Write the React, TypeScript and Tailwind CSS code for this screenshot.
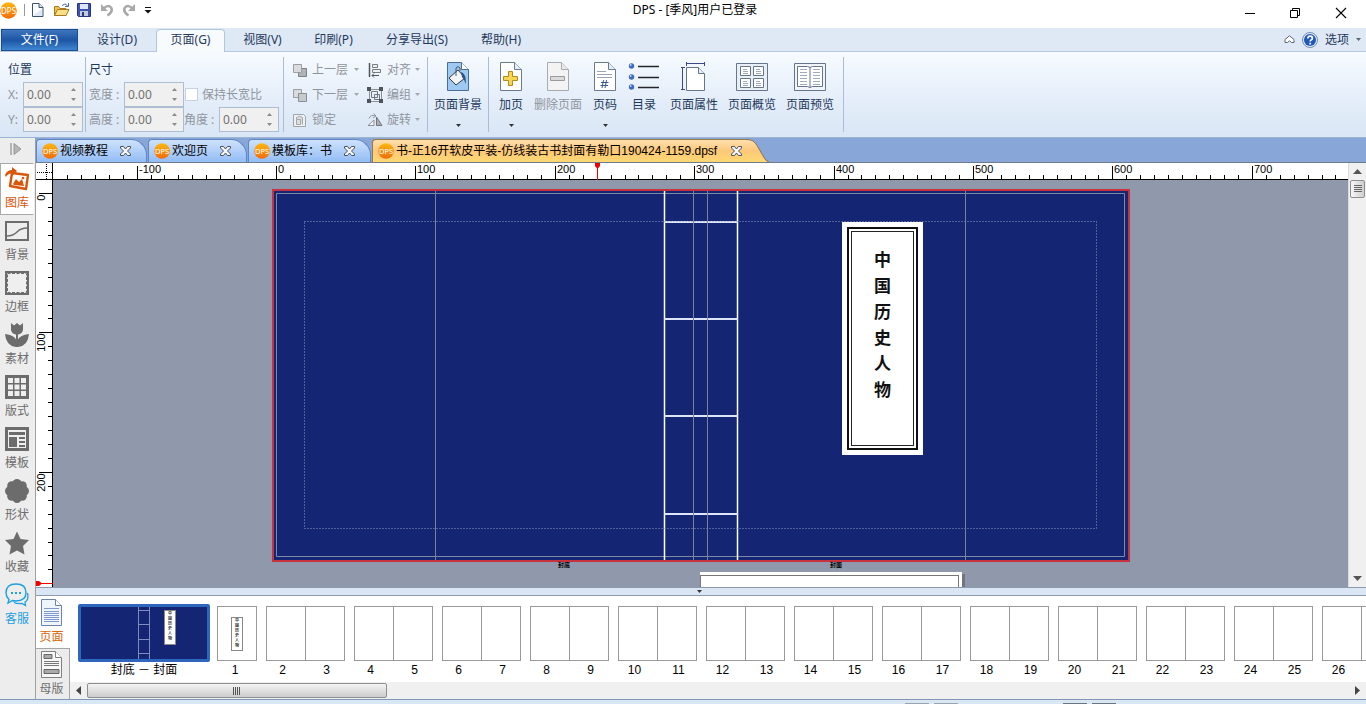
import type { ReactNode } from "react";

const UI = "font-['Noto_Sans','Noto_Sans_CJK_SC',sans-serif]";
const SONG = "font-['Liberation_Sans','Noto_Sans_CJK_SC',sans-serif]";

/* ---------- small shared pieces ---------- */

function Logo({ className }: { className?: string }) {
  return (
    <svg viewBox="0 0 17 17" className={className} aria-hidden="true">
      <defs>
        <linearGradient id="dps" x1="0" y1="0" x2="0" y2="1">
          <stop offset="0" stopColor="#fdb913" />
          <stop offset="1" stopColor="#f26a0a" />
        </linearGradient>
      </defs>
      <circle cx="8.5" cy="8.5" r="8.300" fill="url(#dps)" />
      <text x="8.5" y="11.500" textAnchor="middle" fontSize="8" fill="#fff" fontFamily="Noto Sans, sans-serif">
        DPS
      </text>
    </svg>
  );
}

function Caret({ className = "text-[#333]" }: { className?: string }) {
  return (
    <svg viewBox="0 0 5 3" className={`h-[3px] w-[5px] shrink-0 ${className}`} aria-hidden="true">
      <path d="M0 0h5L2.5 3z" fill="currentColor" />
    </svg>
  );
}

function Divider() {
  return <div className="my-[5px] w-px shrink-0 bg-[#a9bdd6]" />;
}

/* ---------- title bar ---------- */

function TitleBar() {
  return (
    <header className="grid h-7 shrink-0 grid-cols-[1fr_auto_1fr] bg-white">
      <div className="flex h-5 items-center">
        <Logo className="h-[17px] w-[17px]" />
        <div className="ml-[7px] h-3 w-px bg-[#999]" />
        <button aria-label="新建" className="ml-[6px] w-[13px]">
          <svg viewBox="0 0 13 16" className="h-4 w-[13px]">
            <path d="M1.5 1.5h6.500l4 4v9h-10.500z" fill="#fbfcfe" stroke="#3c5070" />
            <path d="M8 1.500v4h4" fill="#d6e2f0" stroke="#3c5070" />
            <path d="M3 13L11 7v7H3z" fill="#dde8f4" />
          </svg>
        </button>
        <button aria-label="打开" className="ml-[9px] w-[18px]">
          <svg viewBox="0 0 18 16" className="h-4 w-[18px]">
            <path d="M1.5 13.500v-9h4l1.500 2h6v7z" fill="#eec24e" stroke="#a9791d" />
            <path d="M1.500 13.500l3-6h11.500l-3 6z" fill="#fbdf85" stroke="#a9791d" />
            <path d="M9 3.500q3-3 5.500 0M15.500 1v3.500H12" fill="none" stroke="#4a6a9a" />
          </svg>
        </button>
        <button aria-label="保存" className="ml-[5px] w-[16px]">
          <svg viewBox="0 0 16 16" className="h-4 w-4">
            <path d="M1.500 1.500h13v13h-12l-1-1z" fill="#3f51b0" stroke="#28358a" />
            <path d="M4 2h8v5H4z" fill="#dfe7f7" />
            <path d="M4 9h8v5H4z" fill="#c6cbd8" />
            <path d="M6 10h2v4H6z" fill="#2b3888" />
          </svg>
        </button>
        <button aria-label="撤销" className="ml-2 w-[14px]">
          <svg viewBox="0 0 14 14" className="h-[14px] w-[14px]">
            <path d="M3 6q5-5 8-1.500 2.500 4-3.500 8" fill="none" stroke="#a9a9a9" strokeWidth="2.500" />
            <path d="M1 1v7h7z" fill="#a9a9a9" />
          </svg>
        </button>
        <button aria-label="重做" className="ml-2 w-[14px]">
          <svg viewBox="0 0 14 14" className="h-[14px] w-[14px]">
            <path d="M11 6q-5-5-8-1.500-2.500 4 3.500 8" fill="none" stroke="#a9a9a9" strokeWidth="2.500" />
            <path d="M13 1v7H6z" fill="#a9a9a9" />
          </svg>
        </button>
        <button aria-label="自定义快速访问工具栏" className="ml-2 w-[8px]">
          <svg viewBox="0 0 8 7" className="h-[7px] w-[8px]">
            <path d="M1 .5h6" stroke="#111" />
            <path d="M.5 3h7L4 6.500z" fill="#111" />
          </svg>
        </button>
      </div>
      <h1 className="flex h-5 items-center pl-6 text-[12px] text-black">DPS - [季风]用户已登录</h1>
      <div className="flex items-center justify-end pr-px">
        <button aria-label="最小化" className="flex h-7 w-[45px] justify-center pt-[7px]">
          <svg viewBox="0 0 12 12" className="h-3 w-3">
            <path d="M1 6.500h10" stroke="#000" />
          </svg>
        </button>
        <button aria-label="还原" className="flex h-7 w-[45px] justify-center pt-[7px]">
          <svg viewBox="0 0 12 12" className="h-3 w-3" fill="none" stroke="#000">
            <path d="M1.500 3.500h7v7h-7zM3.500 3.500v-2h7v7h-2" />
          </svg>
        </button>
        <button aria-label="关闭" className="flex h-7 w-[48px] justify-center pt-[7px]">
          <svg viewBox="0 0 12 12" className="h-3 w-3">
            <path d="M1 1l10 10M11 1L1 11" stroke="#000" strokeWidth="1.100" />
          </svg>
        </button>
      </div>
    </header>
  );
}

/* ---------- ribbon tabs ---------- */

function MenuBar() {
  const tab = "h-6 text-center text-[#1e395b]";
  return (
    <nav className="flex h-6 shrink-0 border-b border-[#b7c9e0] bg-[#dfe8f5] text-[12px]">
      <button className="mt-px ml-px h-[22px] w-[77px] border border-[#1d4b8c] bg-linear-to-b from-[#3e76bd] via-[#1c55a4] to-[#3f86d0] text-white">
        文件(F)
      </button>
      <button className={`${tab} w-[78px]`}>设计(D)</button>
      <button className="mt-px h-6 w-[69px] shrink-0 rounded-t-[4px] border border-b-0 border-[#b3c5dd] bg-[#f8fbfe] pb-[3px] text-center text-[#1e395b]">
        页面(G)
      </button>
      <button className={`${tab} w-[75px]`}>视图(V)</button>
      <button className={`${tab} w-[67px]`}>印刷(P)</button>
      <button className={`${tab} w-[100px]`}>分享导出(S)</button>
      <button className={`${tab} w-[68px]`}>帮助(H)</button>
      <div className="ml-auto flex items-center gap-[7px] pr-[5px] text-[#1e395b]">
        <button aria-label="折叠功能区">
          <svg viewBox="0 0 11 9" className="h-[9px] w-[11px]">
            <path d="M1 4.500L5.500.8 10 4.500v3H7.500L5.500 5.800 3.500 7.500H1z" fill="#fff" stroke="#5a6678" />
          </svg>
        </button>
        <button aria-label="帮助">
          <svg viewBox="0 0 16 16" className="h-4 w-4">
            <circle cx="8" cy="8" r="7.500" fill="#e8eff9" stroke="#6f8cb8" />
            <circle cx="8" cy="8" r="6" fill="#2058b8" />
            <path d="M5.800 6.500q0-2.300 2.300-2.300t2.300 2q0 1.200-1.300 1.800-.9.500-.9 1.500M8.200 10.700v1.700" fill="none" stroke="#fff" strokeWidth="1.700" />
          </svg>
        </button>
        <button className="flex items-center gap-[7px]">
          选项
          <Caret className="text-[#5a6678]" />
        </button>
      </div>
    </nav>
  );
}

/* ---------- ribbon ---------- */

function Spin({ id, label, w }: { id: string; label: string; w: string }) {
  return (
    <div className="flex h-[25px] items-center text-[#8f959d]">
      <label htmlFor={id} className={`${w} shrink-0 whitespace-nowrap`}>
        {label}
      </label>
      <div className="flex h-[25px] w-[60px] items-center border border-[#adbdd2] bg-[#f0f0f0]">
        <input id={id} defaultValue="0.00" className="h-full w-[46px] bg-transparent pl-[3px] text-[12px] text-[#707070] outline-none" />
        <svg viewBox="0 0 7 13" className="h-[13px] w-[7px]" aria-hidden="true">
          <path d="M1 3L3.500 0 6 3zM1 10L3.500 13 6 10z" fill="#868b92" />
        </svg>
      </div>
    </div>
  );
}

const arrangeIcons: Record<string, ReactNode> = {
  up: (
    <>
      <path d="M6.500 6.500h8v8h-8z" fill="#b0b3b7" stroke="#7d8186" />
      <path d="M1.500 2.500h8v8h-8z" fill="#d9dbde" stroke="#9b9fa4" />
    </>
  ),
  down: (
    <>
      <path d="M1.500 2.500h8v8h-8z" fill="#d9dbde" stroke="#9b9fa4" />
      <path d="M6.500 6.500h8v8h-8z" fill="#c7cacd" stroke="#8a8e93" />
    </>
  ),
  lock: (
    <>
      <path d="M1.500 2.500h10l2 2v10h-12z" fill="#f0f1f2" stroke="#a1a5aa" />
      <path d="M4.500 7v-1.500q3-2.500 6 0v7M4.500 7.500h4v5h-4z" fill="#dedfe1" stroke="#a1a5aa" />
    </>
  ),
  align: (
    <>
      <path d="M2.500 1v14" stroke="#50555c" strokeWidth="1.500" />
      <path d="M5.500 2.500h5v3h-5zM5.500 7.500h8v3h-8z" fill="#eef0f2" stroke="#777c83" />
      <path d="M5 13.500h7M7 11.500l-2 2 2 2" fill="none" stroke="#50555c" />
    </>
  ),
  group: (
    <>
      <path d="M2.500 2.500h12v12h-12z" fill="none" stroke="#8d9298" />
      <path d="M4.500 4.500h6v6h-6zM7.500 7.500h5v5h-5z" fill="none" stroke="#73787e" />
      <path d="M0 0h4v4H0zM12 0h4v4h-4zM0 12h4v4H0zM12 12h4v4h-4z" fill="#4f545a" />
    </>
  ),
  rotate: (
    <>
      <path d="M1 13.500L7 8v5.500z" fill="#f3f4f5" stroke="#8e9298" />
      <path d="M9.500 5v8.500H15z" fill="#aaadb2" stroke="#72767c" />
      <path d="M2 6.500Q4 2 8 4M6.500 1.500L9 4 6 6" fill="none" stroke="#8e9298" />
    </>
  ),
};

function ArrangeButton({ icon, label, caret = true }: { icon: string; label: string; caret?: boolean }) {
  return (
    <button className="flex h-[25px] items-center text-[#8f959d]">
      <svg viewBox="0 0 16 16" className="mr-1 h-4 w-4">
        {arrangeIcons[icon]}
      </svg>
      {label}
      {caret && (
        <span className="ml-auto">
          <Caret className="text-[#a2a8b0]" />
        </span>
      )}
    </button>
  );
}

const sheet = "M5.500 1.500h14l7 7v21h-21z";
const fold = "M19.500 1.500v7h7";

const bigIcons: Record<string, ReactNode> = {
  background: (
    <>
      <path d={sheet} fill="#9dc9f2" stroke="#4d6c94" />
      <path d={fold} fill="#fff" stroke="#4d6c94" />
      <path d="M7 17l9-8 7 8-9 7z" fill="#f2f4f6" stroke="#333b46" />
      <path d="M14 15V7q2-3 4 0v3" fill="none" stroke="#4a525e" />
      <path d="M19 11q5 1 5 12-1.500-4-4-7z" fill="#2c5285" />
    </>
  ),
  add: (
    <>
      <path d={sheet} fill="#fff" stroke="#6c7a90" />
      <path d={fold} fill="#e4edf7" stroke="#6c7a90" />
      <path d="M13.500 10.500h4v5h5v4h-5v5h-4v-5h-5v-4h5z" fill="#f5d552" stroke="#b58c1c" />
    </>
  ),
  remove: (
    <>
      <path d={sheet} fill="#f3f3f4" stroke="#a8acb2" />
      <path d={fold} fill="#e8e8ea" stroke="#a8acb2" />
      <path d="M8.500 15.500h14v4h-14z" fill="#dadada" stroke="#989ba0" />
    </>
  ),
  number: (
    <>
      <path d={sheet} fill="#fff" stroke="#6c7a90" />
      <path d={fold} fill="#e4edf7" stroke="#6c7a90" />
      <path d="M8 10.500h9M8 13.500h15M8 16.500h15" stroke="#98a4b6" />
      <path d="M14.500 19l-1.500 8M17.500 19L16 27M12 21.500h7.500M11.500 24.500h7.500" stroke="#3c5b88" fill="none" />
    </>
  ),
  toc: (
    <>
      <circle cx="3.500" cy="5" r="2.700" fill="#3d6bc0" />
      <circle cx="3.500" cy="16" r="2.700" fill="#3d6bc0" />
      <circle cx="3.500" cy="26" r="2.700" fill="#3d6bc0" />
      <circle cx="2.700" cy="4" r=".9" fill="#c6d8f4" />
      <circle cx="2.700" cy="15" r=".9" fill="#c6d8f4" />
      <circle cx="2.700" cy="25" r=".9" fill="#c6d8f4" />
      <path d="M10 5.500h21M10 16.500h21M10 26.500h21" stroke="#23262b" strokeWidth="1.500" />
    </>
  ),
  props: (
    <>
      <path d="M8.500 6.500h12l6 6v17h-18z" fill="#fff" stroke="#67758b" />
      <path d="M20.500 6.500v6h6" fill="#e4edf7" stroke="#67758b" />
      <path d="M8 2.500h18M8.500 1v4M26.500 1v4M4.500 6v23M3 6.500h4M3 28.500h4" stroke="#3b4a80" fill="none" />
    </>
  ),
  overview: (
    <>
      <path d="M.5 2.500h31v27H.5z" fill="#e9eff6" stroke="#67758b" />
      <path d="M4.500 5.500h10v9h-10zM17.500 5.500h10v9h-10zM4.500 17.500h10v9h-10zM17.500 17.500h10v9h-10z" fill="#fff" stroke="#67758b" />
      <path d="M7 8.500h4M7 10.500h5M7 12.500h5M20 8.500h4M20 10.500h5M20 12.500h5M7 20.500h4M7 22.500h5M7 24.500h5M20 20.500h4M20 22.500h5M20 24.500h5" stroke="#9eabbd" />
    </>
  ),
  preview: (
    <>
      <path d="M.5 2.500h31v27H.5z" fill="#f1f5fa" stroke="#67758b" />
      <path d="M3.500 5.500h10l2.500 1 2.500-1h10v20h-10l-2.500 1-2.500-1h-10zM16 6.500v20" fill="#fff" stroke="#67758b" />
      <path d="M6 8.500h7M6 11.500h7M6 14.500h7M6 17.500h7M6 20.500h7M6 23.500h7M19 8.500h7M19 11.500h7M19 14.500h7M19 17.500h7M19 20.500h7M19 23.500h7" stroke="#9eabbd" />
    </>
  ),
};

function BigButton({ icon, label, w, caret, disabled }: { icon: string; label: string; w: string; caret?: boolean; disabled?: boolean }) {
  return (
    <button disabled={disabled} className={`flex ${w} shrink-0 flex-col items-center pt-[9px] ${disabled ? "text-[#8f959d]" : "text-[#1e395b]"}`}>
      <svg viewBox="0 0 32 32" className="h-8 w-8">
        {bigIcons[icon]}
      </svg>
      <span className="h-6 leading-6 whitespace-nowrap">{label}</span>
      {caret && (
        <span className="flex h-4 items-center">
          <Caret />
        </span>
      )}
    </button>
  );
}

function Ribbon() {
  return (
    <section className="flex h-[86px] shrink-0 border-b border-[#9db4d3] bg-linear-to-b from-[#f7fbff] via-[#e6effa] to-[#d9e6f5] text-[12px]">
      <div className="w-[85px] shrink-0 pt-[5px] pl-2">
        <h2 className="h-[25px] leading-[25px] text-[#1e395b]">位置</h2>
        <Spin id="x" label="X:" w="w-[15px]" />
        <Spin id="y" label="Y:" w="w-[15px]" />
      </div>
      <Divider />
      <div className="w-[197px] shrink-0 pt-[5px] pl-[3px]">
        <h2 className="h-[25px] leading-[25px] text-[#1e395b]">尺寸</h2>
        <div className="flex">
          <Spin id="w" label="宽度 :" w="w-[35px]" />
          <label className="flex items-center pl-[1px] text-[#8f959d]">
            <input type="checkbox" className="mr-1 h-[13px] w-[13px] appearance-none border border-[#c6d1df] bg-white" />
            保持长宽比
          </label>
        </div>
        <div className="flex">
          <Spin id="h" label="高度 :" w="w-[35px]" />
          <Spin id="a" label="角度 :" w="w-[35px]" />
        </div>
      </div>
      <Divider />
      <div className="grid w-[143px] shrink-0 grid-cols-[67px_53px] content-start gap-x-2 pt-[5px] pl-2">
        <ArrangeButton icon="up" label="上一层" />
        <ArrangeButton icon="align" label="对齐" />
        <ArrangeButton icon="down" label="下一层" />
        <ArrangeButton icon="group" label="编组" />
        <ArrangeButton icon="lock" label="锁定" caret={false} />
        <ArrangeButton icon="rotate" label="旋转" />
      </div>
      <Divider />
      <BigButton icon="background" label="页面背景" w="w-[60px]" caret />
      <Divider />
      <BigButton icon="add" label="加页" w="w-[44px]" caret />
      <BigButton icon="remove" label="删除页面" w="w-[50px]" disabled />
      <BigButton icon="number" label="页码" w="w-[44px]" caret />
      <BigButton icon="toc" label="目录" w="w-[34px]" />
      <BigButton icon="props" label="页面属性" w="w-[66px]" />
      <BigButton icon="overview" label="页面概览" w="w-[50px]" />
      <BigButton icon="preview" label="页面预览" w="w-[66px]" />
      <Divider />
    </section>
  );
}

/* ---------- left tool bar ---------- */

const tools: { label: string; icon: ReactNode; tone?: string }[] = [
  {
    label: "图库",
    tone: "text-[#d9560b]",
    icon: (
      <>
        <path d="M7 6l16 2-2 14-16-3z" fill="none" stroke="currentColor" strokeWidth="2.400" strokeLinejoin="round" />
        <path d="M8 17l3-5 3 3 3-3 2 7-10-1z" fill="currentColor" />
        <circle cx="18" cy="11" r="1.300" fill="currentColor" />
        <path d="M0 8q2-5 7-5V0l5 4-5 5V6.500Q3 6 1 10z" fill="currentColor" />
      </>
    ),
  },
  {
    label: "背景",
    icon: (
      <>
        <path d="M1 3h22v18H1z" fill="none" stroke="currentColor" strokeWidth="2" />
        <path d="M2 17q6 0 10-4t10-4" fill="none" stroke="currentColor" strokeWidth="1.500" />
      </>
    ),
  },
  {
    label: "边框",
    icon: (
      <>
        <path d="M1 1h22v22H1z" fill="none" stroke="currentColor" strokeWidth="2" />
        <path d="M2.500 2.500h19v19h-19z" fill="#efefef" stroke="currentColor" strokeDasharray="3 1.500" />
      </>
    ),
  },
  {
    label: "素材",
    icon: (
      <path d="M6 0l3 2.500L12 0l3 2.500L18 0v7q-1 4-5 4.500v5Q15 12 24 11q-1 12-11 13h-2Q1 23 0 11q9 1 11 5.500v-5Q7 11 6 7z" fill="currentColor" />
    ),
  },
  {
    label: "版式",
    icon: (
      <>
        <path d="M0 0h24v24H0z" fill="currentColor" />
        <path d="M3 3h5v5H3zM9.500 3h5v5h-5zM16 3h5v5h-5zM3 9.500h5v5H3zM9.500 9.500h5v5h-5zM16 9.500h5v5h-5zM3 16h5v5H3zM9.500 16h5v5h-5zM16 16h5v5h-5z" fill="#efefef" />
      </>
    ),
  },
  {
    label: "模板",
    icon: (
      <>
        <path d="M1.500 1.500h21v21h-21z" fill="#efefef" stroke="currentColor" strokeWidth="3" />
        <path d="M4 5h16v3H4zM4 10h8v10H4zM14 10h6v2h-6zM14 14h6v2h-6zM14 18h6v2h-6z" fill="currentColor" />
      </>
    ),
  },
  {
    label: "形状",
    icon: (
      <g fill="currentColor">
        <circle cx="12" cy="12" r="10" />
        <circle cx="12" cy="4.500" r="4.500" />
        <circle cx="17.300" cy="6.700" r="4.500" />
        <circle cx="19.500" cy="12" r="4.500" />
        <circle cx="17.300" cy="17.300" r="4.500" />
        <circle cx="12" cy="19.500" r="4.500" />
        <circle cx="6.700" cy="17.300" r="4.500" />
        <circle cx="4.500" cy="12" r="4.500" />
        <circle cx="6.700" cy="6.700" r="4.500" />
      </g>
    ),
  },
  {
    label: "收藏",
    icon: <path d="M12 .5l3.500 7.500 8.500 1-6 6 1.500 8.500L12 19.500l-7.500 4L6 15 0 9l8.500-1z" fill="currentColor" />,
  },
  {
    label: "客服",
    tone: "text-[#1e9fe0]",
    icon: (
      <>
        <path d="M4 16.500Q1 13.500 1 10 1 1 11 1t10 8.500q0 8.500-10 8.500-2 0-3.500-.5L3 20z" fill="none" stroke="currentColor" strokeWidth="1.400" />
        <path d="M22.500 10q1.500 7-2.500 9l.5 3.500-3.500-2q-5 .5-8-1" fill="none" stroke="currentColor" strokeWidth="1.300" />
        <path d="M6 9h2v2H6zM10 9h2v2h-2zM14 9h2v2h-2z" fill="currentColor" />
      </>
    ),
  },
];

function SideBar() {
  return (
    <aside className="w-9 shrink-0 border-r border-[#a0a0a0] bg-[#ededed]">
      <button aria-label="展开" className="flex h-[25px] w-full items-center justify-center pb-[3px] pr-1">
        <svg viewBox="0 0 12 12" className="h-3 w-3">
          <path d="M1 0v12" stroke="#a0a0a0" strokeWidth="1.500" />
          <path d="M4 .5L11 6l-7 5.500z" fill="#b4b4b4" stroke="#999" />
        </svg>
      </button>
      {tools.map((t, i) => (
        <button
          key={t.label}
          className={`flex h-[52px] w-[34px] flex-col items-center border pt-[3px] ${i === 0 ? "border-[#a9a9a9] border-r-white bg-white" : "border-transparent"} ${t.tone ?? "text-[#6c6c6c]"}`}
        >
          <svg viewBox="0 0 24 24" className="h-6 w-6 shrink-0">
            {t.icon}
          </svg>
          <span className="text-[12px] leading-6">{t.label}</span>
        </button>
      ))}
    </aside>
  );
}

/* ---------- document tabs ---------- */

function CloseMark() {
  return (
    <svg viewBox="0 0 11 10" className="h-[10px] w-[11px]">
      <path d="M.5.500h3l2 2.500 2-2.500h3v1.500L7.500 5l3 3v1.500h-3l-2-2.500-2 2.500h-3V8l3-3-3-3z" fill="#f4f6f9" stroke="#4a525e" />
    </svg>
  );
}

function DocTabs() {
  const docs = [
    { name: "视频教程", w: "w-[111px]" },
    { name: "欢迎页", w: "w-[99px]" },
    { name: "模板库：书", w: "w-[123px]" },
  ];
  return (
    <div className={`flex h-[25px] shrink-0 items-end overflow-hidden border-b border-[#6f7c90] bg-[#88a7d8] ${SONG} text-[12px] text-black`}>
      {docs.map((d) => (
        <div key={d.name} className={`${d.w} mr-px flex h-[23px] shrink-0 items-center rounded-tl-[4px] rounded-tr-[16px] border border-b-0 border-[#5f87c6] bg-linear-to-b from-[#cfe1fb] to-[#92bdf6] pl-[5px]`}>
          <Logo className="h-4 w-4" />
          <button className="ml-[2px]">{d.name}</button>
          <button aria-label="关闭标签" className="ml-3">
            <CloseMark />
          </button>
        </div>
      ))}
      <div className="flex h-[23px] shrink-0">
        <div className="flex items-center rounded-tl-[4px] border-t border-l border-[#9a7a45] bg-linear-to-b from-[#fddfae] via-[#fdc878] to-[#ffd873] pr-1 pl-[5px]">
          <Logo className="h-4 w-4" />
          <button className="ml-[2px] whitespace-nowrap">书-正16开软皮平装-仿线装古书封面有勒口190424-1159.dpsf</button>
          <button aria-label="关闭标签" className="ml-[14px]">
            <CloseMark />
          </button>
        </div>
        <svg viewBox="0 0 24 23" className="h-[23px] w-6" aria-hidden="true">
          <defs>
            <linearGradient id="tab-end" x1="0" y1="0" x2="0" y2="1">
              <stop offset="0" stopColor="#fddfae" />
              <stop offset=".5" stopColor="#fdc878" />
              <stop offset="1" stopColor="#ffd873" />
            </linearGradient>
          </defs>
          <path d="M0 .5h1q7 0 10 6l7 12q2 4 5 4.500H0z" fill="url(#tab-end)" />
          <path d="M0 .5h1q7 0 10 6l7 12q2 4 5 4.500" fill="none" stroke="#8a7148" />
        </svg>
      </div>
    </div>
  );
}

/* ---------- rulers ---------- */

const STEP = 13.94;
const hTicks = Array.from({ length: 92 }, (_, i) => i - 15);
const vTicks = Array.from({ length: 28 }, (_, i) => i);

function HRuler() {
  return (
    <div className="flex h-[17px] shrink-0 bg-white">
      <svg className="h-[17px] w-[17px] shrink-0" viewBox="0 0 17 17" aria-hidden="true">
        <path d="M10.500 1v16M1 9.500h16" stroke="#000" strokeDasharray="1 1" />
        <path d="M0 16.500h17M16.500 0v17" stroke="#000" />
      </svg>
      <svg className={`h-[17px] min-w-0 flex-1 ${SONG} text-[11px]`}>
        {hTicks.map((n) => {
          const x = Math.round(223 + n * STEP) + 0.5;
          const major = n % 10 === 0;
          return (
            <g key={n}>
              <path d={`M${x} ${major ? 3 : 12}V17`} stroke="#000" />
              {major && (
                <text x={x + 1.5} y="10" fill="#000">
                  {n * 10}
                </text>
              )}
            </g>
          );
        })}
        <path d="M0 16.500h3000" stroke="#000" />
        <path d="M544.500 0v17" stroke="#e00" />
        <path d="M542 0h5v3l-2.500 3-2.500-3z" fill="#e00" />
      </svg>
    </div>
  );
}

function VRuler() {
  return (
    <svg className={`h-full w-[17px] shrink-0 bg-white ${SONG} text-[11px]`}>
      {vTicks.map((n) => {
        const y = Math.round(13 + n * STEP) + 0.5;
        const major = n % 10 === 0;
        return (
          <g key={n}>
            <path d={`M${major ? 3 : 12} ${y}H17`} stroke="#000" />
            {major && (
              <text transform={`translate(9 ${y + 1}) rotate(-90)`} textAnchor="end" fill="#000">
                {n * 10}
              </text>
            )}
          </g>
        );
      })}
      <path d="M16.500 0v2000" stroke="#000" />
      <path d="M0 403.500h17" stroke="#e00" />
      <path d="M0 401h3l3 2.500-3 2.500H0z" fill="#e00" />
    </svg>
  );
}

/* ---------- canvas ---------- */

function Cover() {
  return (
    <div className="absolute top-[9px] left-[219px] h-[373px] w-[858px] border-2 border-[#c8323f] bg-[#142673]">
      <svg viewBox="0 0 854 369" className="absolute inset-0 h-full w-full" fill="none" aria-hidden="true">
        <path d="M2.500 2.500h848v363h-848z" stroke="#7f88a6" />
        <path d="M390.500 0v369M463.500 0v369" stroke="#fff" strokeWidth="1.500" />
        <path d="M390 31h74M390 128h74M390 225h74M390 323h74" stroke="#dfe5f8" strokeWidth="2" />
        <path d="M30.500 30.500h792v307h-792z" stroke="#8f9ac4" strokeDasharray="1 2" />
        <path d="M161.500 0v369M419.500 0v369M433.500 0v369M691.500 0v369" stroke="#7c8292" />
      </svg>
      <div className="absolute top-[31px] left-[568px] h-[233px] w-[81px] bg-white p-[5px]">
        <div className="h-full border-2 border-[#111] p-[2px]">
          <div className="flex h-full flex-col items-center border border-[#222] pt-[15px] text-[17px] leading-[26px] font-bold text-[#111]">
            {"中国历史人物".split("").map((c) => (
              <span key={c}>{c}</span>
            ))}
          </div>
        </div>
      </div>
    </div>
  );
}

function Canvas() {
  return (
    <div className="relative min-w-0 flex-1 overflow-hidden bg-[#9098ac]">
      <Cover />
      <div className="absolute top-[382px] left-[505px] text-[6px] leading-[6px] font-bold text-black">封底</div>
      <div className="absolute top-[382px] left-[777px] text-[6px] leading-[6px] font-bold text-black">封面</div>
      <div className="absolute top-[392px] left-[647px] h-[300px] w-[262px] bg-white pt-[3px] pr-[3px] shadow-[3px_2px_0_#70757f]">
        <div className="h-full border border-[#777]" />
      </div>
    </div>
  );
}

function VScroll() {
  return (
    <div className="flex w-[18px] shrink-0 flex-col items-center border-l border-[#dcdcdc] bg-[#f0f0f0]">
      <button aria-label="向上滚动" className="flex h-[17px] items-center">
        <svg viewBox="0 0 9 5" className="h-[5px] w-[9px]">
          <path d="M0 5L4.500 0 9 5z" fill="#555" />
        </svg>
      </button>
      <button aria-label="垂直滚动条" className="flex h-[18px] w-[15px] items-center justify-center rounded-[2px] border border-[#8f8f8f] bg-linear-to-r from-[#f6f6f6] to-[#cfcfcf]">
        <svg viewBox="0 0 8 8" className="h-2 w-2">
          <path d="M0 .5h8M0 2.500h8M0 4.500h8M0 6.500h8" stroke="#666" />
        </svg>
      </button>
      <button aria-label="向下滚动" className="mt-auto flex h-[17px] items-center">
        <svg viewBox="0 0 9 5" className="h-[5px] w-[9px]">
          <path d="M0 0h9L4.500 5z" fill="#555" />
        </svg>
      </button>
    </div>
  );
}

/* ---------- page strip ---------- */

function PageIcon({ master }: { master?: boolean }) {
  return (
    <svg viewBox="0 0 24 28" className="h-7 w-6 shrink-0">
      <path d="M1.500.500h14l6 6v20h-20z" fill={master ? "#f7f7f7" : "#eff5fc"} stroke={master ? "#808080" : "#6e84a6"} />
      <path d="M15.500.500v6h6" fill="#fff" stroke={master ? "#808080" : "#6e84a6"} />
      {master ? (
        <>
          <path d="M4 3.500h8v4H4zM4 18.500h15v4H4z" fill="#aaa" stroke="#666" />
          <path d="M4 10.500h15M4 12.500h15M4 14.500h15" stroke="#777" />
        </>
      ) : (
        <path d="M4 9.500h15M4 12.500h15M4 14.500h15M4 16.500h15M4 18.500h15M4 20.500h15M4 22.500h15" stroke="#8397cf" />
      )}
    </svg>
  );
}

function MiniLabel({ className }: { className: string }) {
  return (
    <div className={`${className} flex w-3 flex-col items-center border border-[#888] bg-white text-[4px] leading-[5px] font-bold text-[#333]`}>
      {"中国历史人物".split("").map((c) => (
        <span key={c}>{c}</span>
      ))}
    </div>
  );
}

const spreads = Array.from({ length: 12 }, (_, i) => [2 + i * 2, 3 + i * 2]).concat([[26]]);

function PageStrip() {
  return (
    <section className="flex h-[103px] shrink-0 bg-white">
      <div className="w-[34px] shrink-0 bg-[#ececec] text-[12px]">
        <button className="flex h-[52px] w-full flex-col items-center bg-white pt-[3px] pr-[3px] text-[#d9660b]">
          <PageIcon />
          <span className="leading-5">页面</span>
        </button>
        <button className="flex h-[51px] w-full flex-col items-center border-t border-r border-[#a5a5a5] pt-[2px] pr-[2px] text-[#707070]">
          <PageIcon master />
          <span className="leading-5">母版</span>
        </button>
      </div>
      <div className={`flex min-w-0 flex-1 flex-col ${SONG} text-[12px] text-black`}>
        <div className="flex h-[86px] items-start overflow-hidden pt-2 pl-2">
          <button className="w-[132px] shrink-0">
            <div className="relative h-[58px] rounded-[2px] border-[3px] border-[#2f66bd] bg-[#142673]">
              <svg viewBox="0 0 126 52" className="h-[52px] w-[126px]" fill="none" stroke="#7f8cc0" aria-hidden="true">
                <path d="M57.500 0v52M68.500 0v52M57 3.500h12M57 17.500h12M57 32.500h12M57 46.500h12" />
              </svg>
              <MiniLabel className="absolute top-[3px] left-[83px] h-[35px]" />
            </div>
            <div className="h-4 leading-4">封底 － 封面</div>
          </button>
          <button className="ml-[5px] w-[44px] shrink-0 pt-[2px]">
            <div className="ml-[2px] flex h-[55px] w-10 items-center justify-center border border-[#9a9a9a]">
              <MiniLabel className="h-[34px]" />
            </div>
            <div className="h-[18px] pr-1 leading-[18px]">1</div>
          </button>
          {spreads.map(([left, right]) => (
            <button key={left} className="w-[88px] shrink-0 pt-[2px]">
              <div className="ml-[7px] flex h-[55px] w-[79px] border border-[#9a9a9a]">
                <div className="w-[39px] border-r border-[#9a9a9a]" />
              </div>
              <div className="flex h-[18px] leading-[18px]">
                <span className="w-[44px] pl-[3px]">{left}</span>
                {right && <span className="w-[44px] pl-[3px]">{right}</span>}
              </div>
            </button>
          ))}
        </div>
        <div className="flex h-[17px] items-center bg-[#f0f0f0] px-[6px]">
          <button aria-label="向左滚动">
            <svg viewBox="0 0 5 9" className="h-[9px] w-[5px]">
              <path d="M5 0L0 4.500 5 9z" fill="#444" />
            </svg>
          </button>
          <button aria-label="水平滚动条" className="ml-[6px] flex h-[15px] w-[300px] items-center justify-center rounded-[2px] border border-[#8f8f8f] bg-linear-to-b from-[#f4f4f4] to-[#cccccc]">
            <svg viewBox="0 0 8 8" className="h-2 w-2">
              <path d="M.5 0v8M2.500 0v8M4.500 0v8M6.500 0v8" stroke="#555" />
            </svg>
          </button>
          <button aria-label="向右滚动" className="ml-auto">
            <svg viewBox="0 0 5 9" className="h-[9px] w-[5px]">
              <path d="M0 0l5 4.500L0 9z" fill="#444" />
            </svg>
          </button>
        </div>
      </div>
    </section>
  );
}

/* ---------- page ---------- */

export default function App() {
  return (
    <div className={`flex h-screen flex-col overflow-hidden ${UI} text-[12px]`}>
      <TitleBar />
      <MenuBar />
      <Ribbon />
      <div className="flex min-h-0 flex-1">
        <SideBar />
        <main className="flex min-w-0 flex-1 flex-col">
          <DocTabs />
          <div className="flex min-h-0 flex-1">
            <div className="flex min-w-0 flex-1 flex-col">
              <HRuler />
              <div className="flex min-h-0 flex-1">
                <VRuler />
                <Canvas />
              </div>
            </div>
            <VScroll />
          </div>
          <div className="flex h-[9px] shrink-0 items-center justify-center border-y border-[#8d9bb0] bg-[#dbe6f4] pr-1">
            <Caret />
          </div>
          <PageStrip />
        </main>
      </div>
      <footer className="flex h-[5px] shrink-0 items-end justify-end gap-[5px] border-t border-[#8296ba] bg-[#d9e6f4] pr-[250px]">
        <div className="h-px w-6 bg-[#9aa3ae]" />
        <div className="mr-[100px] h-px w-6 bg-[#9aa3ae]" />
        <div className="h-px w-6 bg-[#6c747e]" />
        <div className="h-px w-6 bg-[#6c747e]" />
      </footer>
    </div>
  );
}
